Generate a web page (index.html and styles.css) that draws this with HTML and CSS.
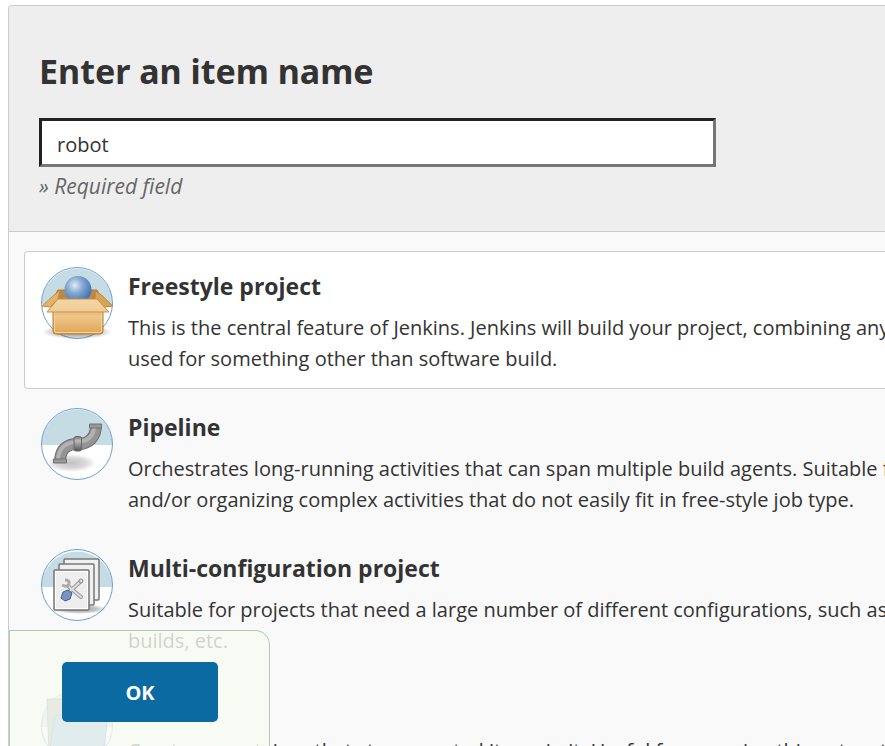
FILE: index.html
```html
<!DOCTYPE html>
<html lang="en">
<head>
<meta charset="utf-8">
<title>New Item [Jenkins]</title>
<link rel="stylesheet" href="styles.css">
</head>
<body>
<form class="panel">
  <div class="name-section">
    <label class="heading" for="name">Enter an item name</label>
    <input class="name-input" id="name" type="text" value="robot">
    <div class="hint">» Required field</div>
  </div>
  <ul class="items">
    <li class="item item-active">
      <svg class="icon" viewBox="0 0 72 72" aria-hidden="true">
        <defs>
          <linearGradient id="box" x2="0" y2="1"><stop stop-color="#dfb26c"/><stop offset=".25" stop-color="#eec68a"/><stop offset="1" stop-color="#dfa555"/></linearGradient>
          <linearGradient id="flap" x2="0" y2="1"><stop stop-color="#f3d7a8"/><stop offset="1" stop-color="#efcb94"/></linearGradient>
          <radialGradient id="ball" cx=".38" cy=".34" r=".65"><stop stop-color="#e3ecf2"/><stop offset=".45" stop-color="#86a9d1"/><stop offset="1" stop-color="#4474b6"/></radialGradient>
          <radialGradient id="shade"><stop stop-color="#000" stop-opacity=".4"/><stop offset=".6" stop-color="#000" stop-opacity=".25"/><stop offset="1" stop-color="#000" stop-opacity="0"/></radialGradient>
        </defs>
        <circle cx="36" cy="36" r="35.5" fill="#fff"/>
        <path d="M.5 37a35.5 35.5 0 0 1 71 0z" fill="#c6dce4"/>
        <circle cx="36" cy="36" r="35.5" fill="none" stroke="#6b9fd5"/>
        <ellipse cx="36" cy="65" rx="35" ry="7" fill="url(#shade)"/>
        <path d="M17 23h39l5 10H11z" fill="#b78a4b" stroke="#b57c2d"/>
        <circle cx="37" cy="22.500" r="13.500" fill="url(#ball)"/>
        <path d="M19 24C14 26 6 35 1 39l8 1 8-8z" fill="#e2b36c" stroke="#c88b38"/>
        <path d="M54 24c6 2 13 11 18 15l-9 1-9-8z" fill="#d9a356" stroke="#c1822d"/>
        <path d="M12 43h50v21q0 3-3 3H15q-3 0-3-3z" fill="url(#box)" stroke="#b57c2d"/>
        <path d="M13.500 45h47v19q0 1.500-2 1.500h-43q-2 0-2-1.500z" fill="none" stroke="#f4d29b"/>
        <path d="M17 32h39l12 13H6z" fill="url(#flap)" stroke="#cb9040"/>
      </svg>
      <div class="item-text">
        <h2 class="item-title">Freestyle project</h2>
        <p class="desc">This is the central feature of Jenkins. Jenkins will build your project, combining any SCM with any build system, and this can be even<br>used for something other than software build.</p>
      </div>
    </li>
    <li class="item">
      <svg class="icon" viewBox="0 0 72 72" aria-hidden="true">
        <defs>
          <linearGradient id="pipe" x2="0" y2="1"><stop stop-color="#777"/><stop offset=".3" stop-color="#bbb"/><stop offset="1" stop-color="#555"/></linearGradient>
        </defs>
        <circle cx="36" cy="36" r="35.5" fill="#fff"/>
        <path d="M.5 37a35.5 35.5 0 0 1 71 0z" fill="#c6dce4"/>
        <circle cx="36" cy="36" r="35.5" fill="none" stroke="#6b9fd5"/>
        <ellipse cx="30" cy="55" rx="25" ry="9" fill="url(#shade)" opacity=".6"/>
        <path d="M19 54C19 40 27 36 37 36C48 36 55 29 55 17" fill="none" stroke="#707070" stroke-width="12"/>
        <path d="M19 54C19 40 27 36 37 36C48 36 55 29 55 17" fill="none" stroke="#949494" stroke-width="10"/>
        <path d="M17 53C17 39 26 34 37 34C47 33 53 28 53 18" fill="none" stroke="#b2b2b2" stroke-width="4"/>
        <path d="M12.500 51h13v4h-13zM48.500 16h12v4h-12z" fill="#999" stroke="#707070"/>
        <rect x="33" y="28.500" width="7.500" height="14.500" rx="2" fill="url(#pipe)" stroke="#666"/>
      </svg>
      <div class="item-text">
        <h2 class="item-title">Pipeline</h2>
        <p class="desc">Orchestrates long-running activities that can span multiple build agents. Suitable for building pipelines (formerly known as workflows)<br>and/or organizing complex activities that do not easily fit in free-style job type.</p>
      </div>
    </li>
    <li class="item">
      <svg class="icon" viewBox="0 0 72 72" aria-hidden="true">
        <circle cx="36" cy="36" r="35.5" fill="#fff"/>
        <path d="M.5 38a35.5 35.5 0 0 1 71 0z" fill="#c6dce4"/>
        <circle cx="36" cy="36" r="35.5" fill="none" stroke="#6b9fd5"/>
        <ellipse cx="38" cy="60" rx="28" ry="5" fill="url(#shade)"/>
        <g fill="#f0f0f0" stroke="#777" stroke-width="1.5">
          <rect x="23" y="10" width="35" height="41" rx="1"/>
          <rect x="18" y="15" width="35" height="41" rx="1"/>
          <rect x="13" y="21" width="35" height="40" rx="1"/>
        </g>
        <path d="M14.500 22.500h32v37h-32z" fill="#eee" stroke="#fff"/>
        <path d="M39 33L28 43M27 37l13 11" fill="none" stroke="#999" stroke-width="4" stroke-linecap="round"/>
        <path d="M39 33L28 43M27 37l13 11" fill="none" stroke="#ddd" stroke-width="2" stroke-linecap="round"/>
        <path d="M24 31q5 0 4 4t-7 1" fill="none" stroke="#aaa" stroke-width="3"/>
        <circle cx="40" cy="32" r="2" fill="#ddd" stroke="#888"/>
        <path d="M22 43l5-2 4 3-2 6-5 2-4-3z" fill="#7894c1" stroke="#3f6096" stroke-linejoin="round"/>
      </svg>
      <div class="item-text">
        <h2 class="item-title">Multi-configuration project</h2>
        <p class="desc">Suitable for projects that need a large number of different configurations, such as testing on multiple environments, platform-specific<br>builds, etc.</p>
      </div>
    </li>
    <li class="item">
      <svg class="icon" viewBox="0 0 72 72" aria-hidden="true">
        <circle cx="36" cy="36" r="35.5" fill="#fff"/>
        <path d="M.5 37a35.5 35.5 0 0 1 71 0z" fill="#c6dce4"/>
        <circle cx="36" cy="36" r="35.5" fill="none" stroke="#6b9fd5"/>
        <path d="M6 9h24l3 6h31v48H8z" fill="#aaa99f" stroke="#888"/>
        <path d="M14 25h53l-5 40H8z" fill="#86add2" stroke="#5c8bbd"/>
      </svg>
      <div class="item-text">
        <h2 class="item-title">Folder</h2>
        <p class="desc">Creates a container that stores nested items in it. Useful for grouping things together. Unlike view, which is just a filter, a folder<br>creates a separate namespace, so you can have multiple things of the same name.</p>
      </div>
    </li>
  </ul>
  <div class="footer">
    <button class="ok" type="submit">OK</button>
  </div>
</form>
</body>
</html>
```
FILE: styles.css
```css
* {
  box-sizing: border-box;
}

body {
  margin: 0;
  height: 100vh;
  overflow: hidden;
  background: #fff;
  color: #333;
  font: 20px/31px "Open Sans", "Noto Sans", sans-serif;
}

.panel {
  margin: 5px 0 0 8px;
  border: 1px solid #ccc;
  border-right: 0;
  border-radius: 4px 0 0 0;
  background: #f9f9f9;
  overflow: hidden;
}

.name-section {
  padding: 44px 30px 29px;
  border-bottom: 1px solid #ccc;
  background: #eee;
}

.heading {
  display: block;
  margin-bottom: 25px;
  font-family: "Noto Sans", "Open Sans", sans-serif;
  font-size: 34px;
  font-weight: 700;
  line-height: 43px;
}

.name-input {
  display: block;
  width: 83%;
  height: 49px;
  padding: 4px 15px 0;
  border: 3px solid;
  border-color: #222 #767676 #767676 #222;
  outline: 0;
  background: #fff;
  color: #333;
  font: inherit;
}

.hint {
  margin-top: 4px;
  color: #666;
  font-size: 21px;
  font-style: italic;
}

.items {
  display: grid;
  gap: 3px;
  margin: 0;
  padding: 19px 0 0 15px;
  list-style: none;
}

.item {
  display: flex;
  gap: 15px;
  height: 138px;
  padding: 15px 16px;
  border: 1px solid transparent;
  border-right: 0;
  border-radius: 4px 0 0 4px;
}

.item-active {
  border-color: #ccc;
  background: #fff;
}

.icon {
  flex: none;
  width: 72px;
  height: 72px;
}

.item-text {
  white-space: nowrap;
}

.item-title {
  margin: 4px 0 10px;
  font-size: 23px;
  line-height: 31px;
}

.desc {
  margin: 0;
}

.footer {
  position: fixed;
  left: 9px;
  bottom: 0;
  padding: 31px 51px 24px 52px;
  border: 1px solid #a9cdb9;
  border-width: 1px 1px 0 1px;
  border-radius: 0 15px 0 0;
  background: rgba(247, 251, 243, 0.8);
}

.ok {
  display: block;
  width: 156px;
  height: 60px;
  border: 0;
  border-radius: 5px;
  background: #0b6aa2;
  color: #fff;
  font: inherit;
  font-weight: 700;
}
```
